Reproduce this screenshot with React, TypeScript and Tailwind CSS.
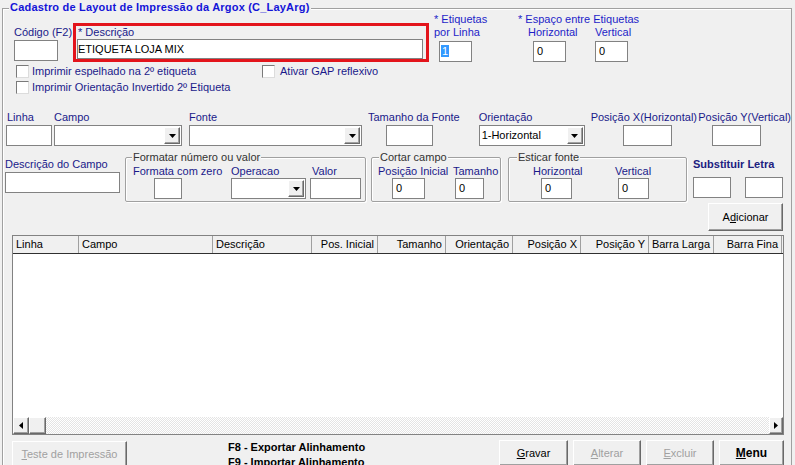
import type { ReactNode } from 'react';

interface BoxProps {
  className?: string;
  children?: ReactNode;
}

interface FieldProps extends BoxProps {
  flush?: boolean;
}

const Field = ({ className = '', flush = false, children }: FieldProps) => (
  <div
    className={`h-[21px] bg-white border border-[#828282] text-black leading-[19px] overflow-hidden whitespace-nowrap ${
      flush ? 'pl-0' : 'pl-[3px]'
    } ${className}`}
  >
    {children}
  </div>
);

const Arrow = ({ dir = 'down' }: { dir?: 'down' | 'left' | 'right' }) => {
  if (dir === 'left') {
    return (
      <svg width="4" height="7" viewBox="0 0 4 7">
        <path d="M4 0v7L0 3.5z" fill="#000" />
      </svg>
    );
  }
  if (dir === 'right') {
    return (
      <svg width="4" height="7" viewBox="0 0 4 7">
        <path d="M0 0v7l4-3.5z" fill="#000" />
      </svg>
    );
  }
  return (
    <svg width="7" height="4" viewBox="0 0 7 4">
      <path d="M0 0h7L3.5 4z" fill="#000" />
    </svg>
  );
};

const Raised = ({ className = '', children }: BoxProps) => (
  <div
    className={`flex items-center justify-center bg-[#f0f0f0] border border-t-white border-l-white border-r-[#696969] border-b-[#696969] shadow-[inset_-1px_-1px_0_#a0a0a0] ${className}`}
  >
    {children}
  </div>
);

const Combo = ({ className = '', value }: { className?: string; value?: string }) => (
  <div className={`h-[21px] bg-white border border-[#828282] flex items-center ${className}`}>
    <span className="flex-1 pl-[2px] text-black whitespace-nowrap overflow-hidden">{value}</span>
    <Raised className="w-[16px] h-[17px] mr-[1px]">
      <Arrow />
    </Raised>
  </div>
);

const Check = () => (
  <div className="w-[13px] h-[13px] shrink-0 bg-white border border-t-[#7a7a7a] border-l-[#7a7a7a] border-r-[#dcdcdc] border-b-[#dcdcdc]" />
);

interface GroupBoxProps {
  title: string;
  className?: string;
  titleClass?: string;
  children?: ReactNode;
}

const GroupBox = ({ title, className = '', titleClass = '', children }: GroupBoxProps) => (
  <div
    className={`flex flex-col border border-[#a0a0a0] rounded-[2px] shadow-[inset_1px_1px_0_#fff,1px_1px_0_#fff] ${className}`}
  >
    <div className={`-mt-[7px] self-start px-[1px] h-[13px] bg-[#f0f0f0] text-[#333] whitespace-nowrap ${titleClass}`}>
      {title}
    </div>
    {children}
  </div>
);

const columns = [
  { label: 'Linha', w: 'w-[66px]', right: false },
  { label: 'Campo', w: 'w-[134px]', right: false },
  { label: 'Descrição', w: 'w-[99px]', right: false },
  { label: 'Pos. Inicial', w: 'w-[66px]', right: true },
  { label: 'Tamanho', w: 'w-[68px]', right: true },
  { label: 'Orientação', w: 'w-[67px]', right: true },
  { label: 'Posição X', w: 'w-[68px]', right: true },
  { label: 'Posição Y', w: 'w-[68px]', right: true },
  { label: 'Barra Larga', w: 'w-[65px]', right: true },
  { label: 'Barra Fina', w: 'w-[68px]', right: true },
];

export default function App() {
  return (
    <div className="w-[795px] h-[465px] overflow-hidden bg-[#f0f0f0] font-['Liberation_Sans',Arial,sans-serif] text-[11px] leading-[13px] text-[#1a1a8a]">
      <div className="ml-[2px] mt-[8px] w-[790px] h-[480px] flex flex-col border border-[#a0a0a0] shadow-[inset_1px_1px_0_#fff]">
        <div className="-mt-[9px] ml-[6px] self-start px-[1px] bg-[#f0f0f0] font-bold text-[#1414d8] leading-[14px] tracking-[0.2px] whitespace-nowrap">
          Cadastro de Layout de Impressão da Argox (C_LayArg)
        </div>

        {/* cabeçalho: código, descrição, etiquetas */}
        <div className="flex items-start -mt-[1px]">
          <div className="ml-[11px] mt-[13px] w-[44px]">
            <div className="whitespace-nowrap">Código (F2)</div>
            <Field className="mt-[1px] w-[44px]" />
          </div>
          <div className="ml-[15px] mt-[10px] w-[356px] h-[39px] border-[3px] border-[#e3141b] flex flex-col">
            <div className="ml-[2px]">* Descrição</div>
            <Field flush className="ml-[1px] w-[346px] h-[20px] leading-[18px]">
              ETIQUETA LOJA MIX
            </Field>
          </div>
          <div className="ml-[5px] w-[84px] text-[#1e1ec8]">
            <div>* Etiquetas</div>
            <div>por Linha</div>
            <Field className="ml-[5px] mt-[2px] w-[33px] !pl-[1px]">
              <span className="bg-[#3399ff] text-white px-[1px]">1</span>
            </Field>
          </div>
          <div className="text-[#1e1ec8]">
            <div className="whitespace-nowrap">* Espaço entre Etiquetas</div>
            <div className="flex">
              <span className="ml-[10px] w-[67px]">Horizontal</span>
              <span>Vertical</span>
            </div>
            <div className="flex mt-[2px]">
              <Field className="ml-[15px] w-[33px]">0</Field>
              <Field className="ml-[29px] w-[33px]">0</Field>
            </div>
          </div>
        </div>

        <div className="flex items-center mt-[3px] h-[13px]">
          <div className="ml-[13px] w-[246px] flex items-center">
            <Check />
            <span className="ml-[3px] whitespace-nowrap">Imprimir espelhado na 2º etiqueta</span>
          </div>
          <div className="flex items-center">
            <Check />
            <span className="ml-[5px] whitespace-nowrap">Ativar GAP reflexivo</span>
          </div>
        </div>
        <div className="flex items-center mt-[3px] h-[13px]">
          <div className="ml-[13px] flex items-center">
            <Check />
            <span className="ml-[3px] whitespace-nowrap">Imprimir Orientação Invertido 2º Etiqueta</span>
          </div>
        </div>

        {/* campos da linha */}
        <div className="flex items-start mt-[17px]">
          <div className="ml-[3px] w-[46px]">
            <div className="pl-[1px]">Linha</div>
            <Field className="mt-[1px] w-[46px]" />
          </div>
          <div className="ml-[2px]">
            <div>Campo</div>
            <Combo className="mt-[1px] w-[128px]" />
          </div>
          <div className="ml-[7px]">
            <div>Fonte</div>
            <Combo className="mt-[1px] w-[173px]" />
          </div>
          <div className="ml-[6px] w-[111px]">
            <div className="whitespace-nowrap">Tamanho da Fonte</div>
            <Field className="mt-[1px] ml-[18px] w-[47px]" />
          </div>
          <div>
            <div>Orientação</div>
            <Combo className="mt-[1px] w-[106px]" value="1-Horizontal" />
          </div>
          <div className="ml-[6px] w-[108px]">
            <div className="whitespace-nowrap">Posição X(Horizontal)</div>
            <Field className="mt-[1px] ml-[32px] w-[49px]" />
          </div>
          <div>
            <div className="whitespace-nowrap">Posição Y(Vertical)</div>
            <Field className="mt-[1px] ml-[14px] w-[49px]" />
          </div>
        </div>

        {/* formatação */}
        <div className="flex items-start mt-[11px]">
          <div className="ml-[2px] w-[115px]">
            <div className="mt-[1px] whitespace-nowrap">Descrição do Campo</div>
            <Field className="mt-[1px] w-[115px]" />
          </div>
          <GroupBox title="Formatar número ou valor" className="ml-[5px] w-[241px] h-[45px]" titleClass="ml-[6px]">
            <div className="flex mt-[1px] leading-[12px]">
              <div className="ml-[7px] w-[98px]">
                <div className="whitespace-nowrap">Formata com zero</div>
                <Field className="ml-[21px] mt-[1px] w-[28px]" />
              </div>
              <div className="w-[80px]">
                <div>Operacao</div>
                <Combo className="mt-[1px] w-[75px]" />
              </div>
              <div>
                <div className="ml-[1px]">Valor</div>
                <Field className="-ml-[1px] mt-[1px] w-[51px]" />
              </div>
            </div>
          </GroupBox>
          <GroupBox title="Cortar campo" className="ml-[5px] w-[130px] h-[45px]" titleClass="ml-[7px]">
            <div className="flex mt-[1px] leading-[12px]">
              <div className="ml-[6px] w-[75px]">
                <div className="whitespace-nowrap">Posição Inicial</div>
                <Field className="ml-[14px] mt-[1px] w-[33px]">0</Field>
              </div>
              <div>
                <div>Tamanho</div>
                <Field className="ml-[2px] mt-[1px] w-[29px]">0</Field>
              </div>
            </div>
          </GroupBox>
          <GroupBox title="Esticar fonte" className="ml-[7px] w-[179px] h-[45px]" titleClass="ml-[8px]">
            <div className="flex mt-[1px] leading-[12px]">
              <div className="ml-[24px] w-[82px]">
                <div>Horizontal</div>
                <Field className="ml-[8px] mt-[1px] w-[31px]">0</Field>
              </div>
              <div>
                <div>Vertical</div>
                <Field className="ml-[3px] mt-[1px] w-[31px]">0</Field>
              </div>
            </div>
          </GroupBox>
          <div className="ml-[6px]">
            <div className="mt-[1px] font-bold whitespace-nowrap text-[#202080]">Substituir Letra</div>
            <div className="flex mt-[6px]">
              <Field className="w-[38px]" />
              <Field className="ml-[14px] w-[38px]" />
            </div>
          </div>
        </div>

        <Raised className="mt-[1px] ml-[705px] w-[75px] h-[28px] text-black">
          <span>
            A<span className="underline">d</span>icionar
          </span>
        </Raised>

        {/* grade */}
        <div className="mt-[4px] ml-[9px] w-[772px] h-[200px] flex flex-col border border-[#828282] bg-white">
          <div className="flex h-[18px] shrink-0 bg-[#f0f0f0] border-b border-[#303030] text-black">
            {columns.map((c) => (
              <div
                key={c.label}
                className={`${c.w} shrink-0 h-full border-r border-[#a0a0a0] leading-[17px] whitespace-nowrap ${
                  c.right ? 'text-right pr-[3px]' : 'pl-[3px]'
                }`}
              >
                {c.label}
              </div>
            ))}
          </div>
          <div className="flex-1 bg-white" />
          <div className="flex h-[17px] shrink-0">
            <Raised className="w-[16px] h-[17px]">
              <Arrow dir="left" />
            </Raised>
            <Raised className="w-[17px] h-[17px]" />
            <div className="flex-1 bg-[repeating-conic-gradient(#ffffff_0_25%,#e4e4e4_0_50%)] bg-[length:2px_2px]" />
            <Raised className="w-[14px] h-[17px]">
              <Arrow dir="right" />
            </Raised>
          </div>
        </div>

        {/* rodapé */}
        <div className="flex items-start mt-[5px]">
          <Raised className="ml-[9px] mt-[1px] w-[115px] h-[26px] text-[#a0a0a0]">
            <span>
              <span className="underline">T</span>este de Impressão
            </span>
          </Raised>
          <div className="ml-[101px] font-bold text-black leading-[15px] whitespace-nowrap">
            <div>F8 - Exportar Alinhamento</div>
            <div>F9 - Importar Alinhamento</div>
          </div>
          <div className="ml-auto mr-[7px] flex gap-[5px]">
            <Raised className="w-[69px] h-[26px] text-black">
              <span>
                <span className="underline">G</span>ravar
              </span>
            </Raised>
            <Raised className="w-[68px] h-[26px] text-[#a0a0a0]">
              <span>
                <span className="underline">A</span>lterar
              </span>
            </Raised>
            <Raised className="w-[68px] h-[26px] text-[#a0a0a0]">
              <span>
                <span className="underline">E</span>xcluir
              </span>
            </Raised>
            <Raised className="w-[65px] h-[26px] text-black font-bold text-[12px]">
              <span>
                <span className="underline">M</span>enu
              </span>
            </Raised>
          </div>
        </div>
      </div>
    </div>
  );
}
